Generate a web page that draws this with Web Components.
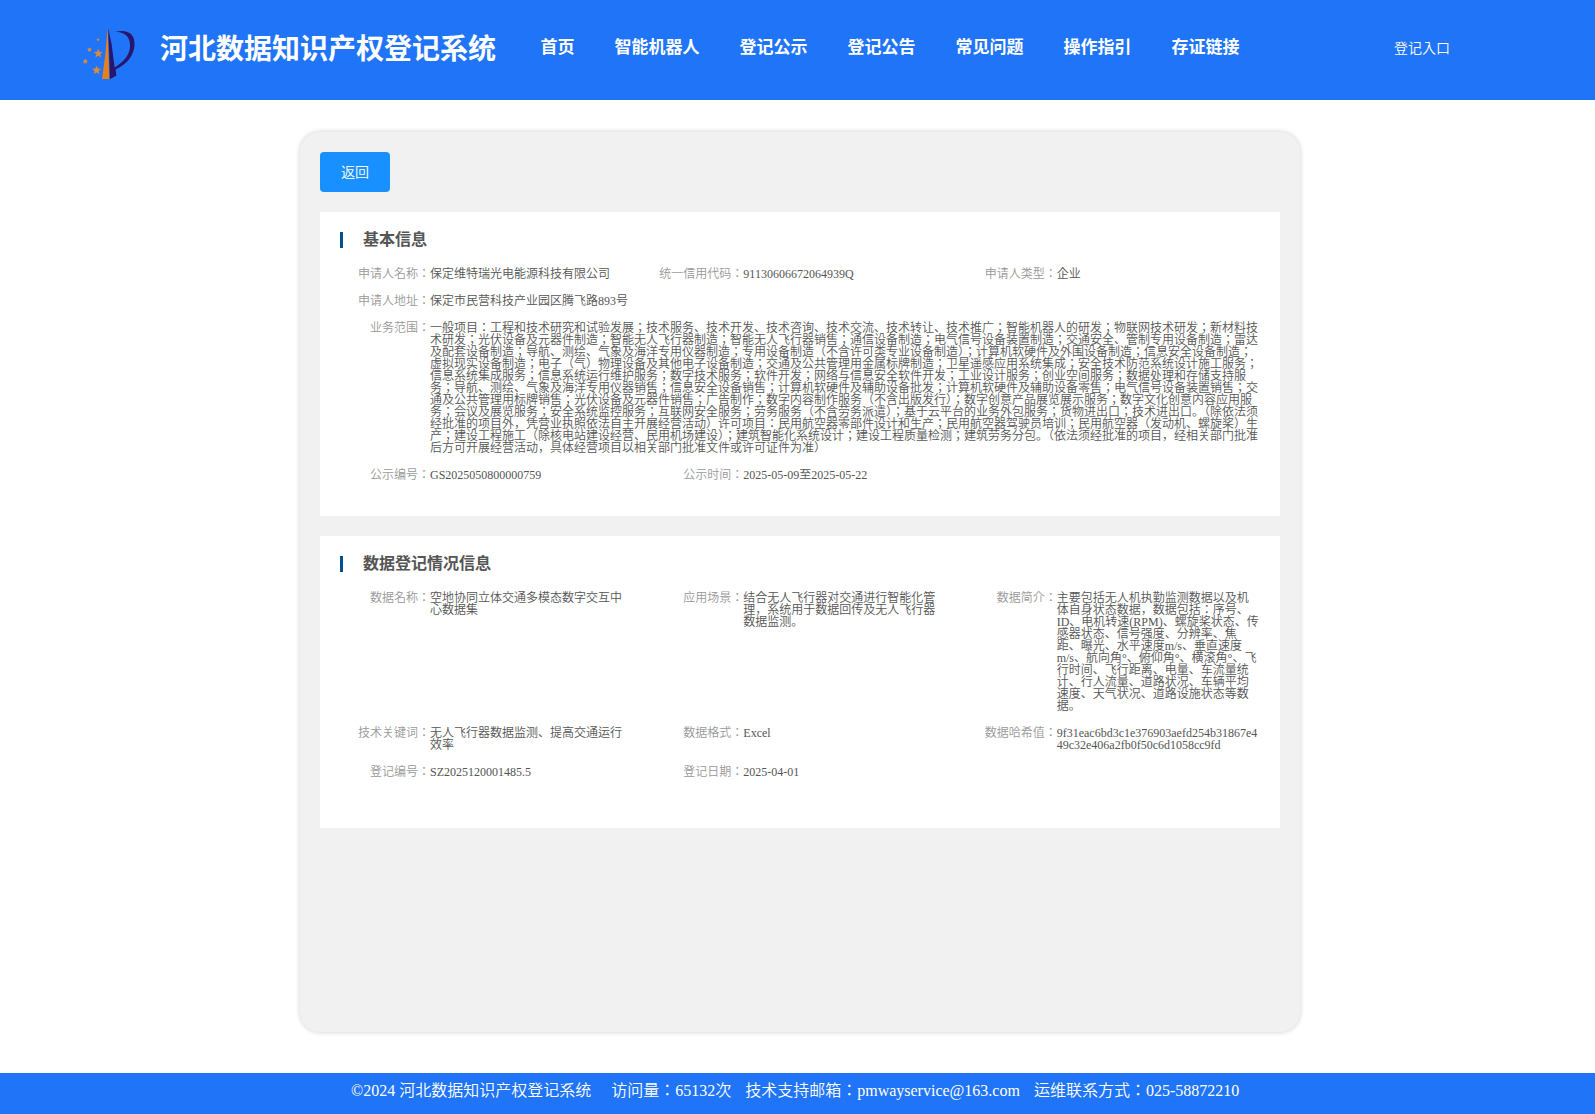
<!DOCTYPE html>
<html>
<head>
<meta charset="utf-8">
<title>河北数据知识产权登记系统</title>
<style>
body{margin:0;background:#fff;font-family:"Liberation Serif","Noto Sans CJK JP",serif;font-weight:350;color:#555}
</style>
</head>
<body>
<registry-page></registry-page>

<template id="t-logo">
<style>:host{display:block;width:56px;height:56px}svg{display:block}</style>
<svg width="56" height="56" viewBox="0 0 56 56">
<path d="M24.6 0.4 L26.3 52 L19 52 Q23 27 24.6 0.4Z" fill="#e6811f"/>
<path d="M25 0.6 L28.6 17 L31.6 40.5 Q47.8 30.5 47 17.5 Q46.4 5.5 32.2 4.5 Q52 1 51.5 18 Q50.6 33.5 32.6 42.6 L33.4 48.6 L26.9 52.2 Q26.2 24 25 0.6Z" fill="#28156e"/>
<g fill="#dc8a3c">
<path d="M15.2 22.2l1.1 2.7 2.9.3-2.2 1.9.7 2.9-2.5-1.6-2.5 1.6.7-2.9-2.2-1.9 2.9-.3z" stroke="#dc8a3c" stroke-width=".4"/>
<path d="M13.6 39l1.1 2.7 2.9.3-2.2 1.9.7 2.9-2.5-1.6-2.5 1.6.7-2.9-2.2-1.9 2.9-.3z" stroke="#dc8a3c" stroke-width=".4"/>
<path d="M6.6 20.2l.7 1.4 1.6.2-1.1 1.3.3 1.6-1.5-.8-1.6.8.3-1.6-1.3-1.4 1.8-.1z"/>
<path d="M2.4 31.4l.8 1.7 1.7.3-1.2 1.3.3 2-1.7-.9-1.7.9.3-2-1.1-1.3 1.8-.2z"/>
<path d="M15 11l.5 1.1 1 .2-.8.8.2 1.1-1-.6-.9.5.2-1.1-.8-.8 1.1-.1z"/>
</g></svg>
</template>

<template id="t-header">
<style>
:host{display:block;height:100px;background:#2074f8;color:#fff}
.bar{display:flex;align-items:flex-start;height:100%;box-sizing:border-box;padding-left:83px}
brand-logo{margin-top:27px;flex:none}
h1{margin:30px 0 0 21px;font-size:28px;line-height:40px;width:336px;white-space:nowrap}
nav{display:flex;gap:40px;margin:35px 0 0 44.5px;font-size:17px;font-weight:bold;line-height:26px;white-space:nowrap}
.entry{margin:39px 0 0 154.5px;font-size:14px;line-height:20px;white-space:nowrap}
</style>
<div class="bar"><brand-logo></brand-logo><h1>河北数据知识产权登记系统</h1>
<nav><span>首页</span><span>智能机器人</span><span>登记公示</span><span>登记公告</span><span>常见问题</span><span>操作指引</span><span>存证链接</span></nav>
<span class="entry">登记入口</span></div>
</template>

<template id="t-card">
<style>
:host{display:block;background:#fff;box-sizing:border-box;padding:20px 0 0 20px;margin-top:20px}
h2{margin:0 0 20px;border-left:3px solid #00508f;padding-left:20px;font-size:16px;line-height:16px;height:16px}
.grid{display:grid;grid-template-columns:repeat(3,1fr);row-gap:15px;font-size:12px;line-height:12px}
</style>
<h2></h2><div class="grid"><slot></slot></div>
</template>

<template id="t-field">
<style>
:host{display:flex;min-width:0}
:host([wide]){grid-column:1/-1}
.label{flex:0 0 90px;text-align:right;color:#999;white-space:nowrap}
.value{flex:1;min-width:0;margin-right:20px;word-wrap:break-word;overflow-wrap:anywhere}
</style>
<span class="label"></span><span class="value"><slot></slot></span>
</template>

<template id="t-button">
<style>
:host{display:block}
button{display:block;width:70px;height:40px;padding:2px 0 0;border:0;border-radius:4px;background:#1890ff;color:#fff;font:350 14px/38px "Liberation Serif","Noto Sans CJK JP",serif}
</style>
<button><slot></slot></button>
</template>

<template id="t-footer">
<style>
:host{display:flex;height:41px;background:#2074f8;color:#fff;font-size:16px;line-height:36px;white-space:pre;padding-left:351px;box-sizing:border-box}
.name{margin-right:20px}.count,.mail{margin-right:14px}
</style>
<span class="name">©2024 河北数据知识产权登记系统</span><span class="count">访问量：65132次</span><span class="mail">技术支持邮箱：pmwayservice@163.com</span><span>运维联系方式：025-58872210</span>
</template>

<template id="t-page">
<style>
:host{display:flex;flex-direction:column;height:1114px;overflow:hidden}
main{width:1000px;height:900px;box-sizing:border-box;margin:32px 0 41px 300px;padding:20px;border-radius:20px;background:#f1f1f1;box-shadow:0 0 5px rgba(0,0,0,.2)}
.a{height:304px}.b{height:292px}
</style>
<site-header></site-header>
<main>
<back-button>返回</back-button>
<info-card class="a" heading="基本信息">
<info-field label="申请人名称">保定维特瑞光电能源科技有限公司</info-field>
<info-field label="统一信用代码">91130606672064939Q</info-field>
<info-field label="申请人类型">企业</info-field>
<info-field wide label="申请人地址">保定市民营科技产业园区腾飞路893号</info-field>
<info-field wide label="业务范围">一般项目：工程和技术研究和试验发展；技术服务、技术开发、技术咨询、技术交流、技术转让、技术推广；智能机器人的研发；物联网技术研发；新材料技术研发；光伏设备及元器件制造；智能无人飞行器制造；智能无人飞行器销售；通信设备制造；电气信号设备装置制造；交通安全、管制专用设备制造；雷达及配套设备制造；导航、测绘、气象及海洋专用仪器制造；专用设备制造（不含许可类专业设备制造）；计算机软硬件及外围设备制造；信息安全设备制造；虚拟现实设备制造；电子（气）物理设备及其他电子设备制造；交通及公共管理用金属标牌制造；卫星遥感应用系统集成；安全技术防范系统设计施工服务；信息系统集成服务；信息系统运行维护服务；数字技术服务；软件开发；网络与信息安全软件开发；工业设计服务；创业空间服务；数据处理和存储支持服务；导航、测绘、气象及海洋专用仪器销售；信息安全设备销售；计算机软硬件及辅助设备批发；计算机软硬件及辅助设备零售；电气信号设备装置销售；交通及公共管理用标牌销售；光伏设备及元器件销售；广告制作；数字内容制作服务（不含出版发行）；数字创意产品展览展示服务；数字文化创意内容应用服务；会议及展览服务；安全系统监控服务；互联网安全服务；劳务服务（不含劳务派遣）；基于云平台的业务外包服务；货物进出口；技术进出口。（除依法须经批准的项目外，凭营业执照依法自主开展经营活动）许可项目：民用航空器零部件设计和生产；民用航空器驾驶员培训；民用航空器（发动机、螺旋桨）生产；建设工程施工（除核电站建设经营、民用机场建设）；建筑智能化系统设计；建设工程质量检测；建筑劳务分包。（依法须经批准的项目，经相关部门批准后方可开展经营活动，具体经营项目以相关部门批准文件或许可证件为准）</info-field>
<info-field label="公示编号">GS2025050800000759</info-field>
<info-field label="公示时间">2025-05-09至2025-05-22</info-field>
</info-card>
<info-card class="b" heading="数据登记情况信息">
<info-field label="数据名称">空地协同立体交通多模态数字交互中心数据集</info-field>
<info-field label="应用场景">结合无人飞行器对交通进行智能化管理，系统用于数据回传及无人飞行器数据监测。</info-field>
<info-field label="数据简介">主要包括无人机执勤监测数据以及机体自身状态数据，数据包括：序号、ID、电机转速(RPM)、螺旋桨状态、传感器状态、信号强度、分辨率、焦距、曝光、水平速度m/s、垂直速度m/s、航向角°、俯仰角°、横滚角°、飞行时间、飞行距离、电量、车流量统计、行人流量、道路状况、车辆平均速度、天气状况、道路设施状态等数据。</info-field>
<info-field label="技术关键词">无人飞行器数据监测、提高交通运行效率</info-field>
<info-field label="数据格式">Excel</info-field>
<info-field label="数据哈希值">9f31eac6bd3c1e376903aefd254b31867e449c32e406a2fb0f50c6d1058cc9fd</info-field>
<info-field label="登记编号">SZ2025120001485.5</info-field>
<info-field label="登记日期">2025-04-01</info-field>
</info-card>
</main>
<site-footer></site-footer>
</template>

<script>
class Base extends HTMLElement{
  constructor(){
    super();
    this.attachShadow({mode:"open"}).appendChild(document.getElementById(this.constructor.tpl).content.cloneNode(true));
  }
}
const plain=(tag,tpl)=>customElements.define(tag,class extends Base{static tpl=tpl});
plain("brand-logo","t-logo");
plain("site-header","t-header");
plain("back-button","t-button");
plain("site-footer","t-footer");
customElements.define("info-card",class extends Base{
  static tpl="t-card";
  connectedCallback(){this.shadowRoot.querySelector("h2").textContent=this.getAttribute("heading")}
});
customElements.define("info-field",class extends Base{
  static tpl="t-field";
  connectedCallback(){this.shadowRoot.querySelector(".label").textContent=this.getAttribute("label")+"："}
});
plain("registry-page","t-page");
</script>
</body>
</html>
